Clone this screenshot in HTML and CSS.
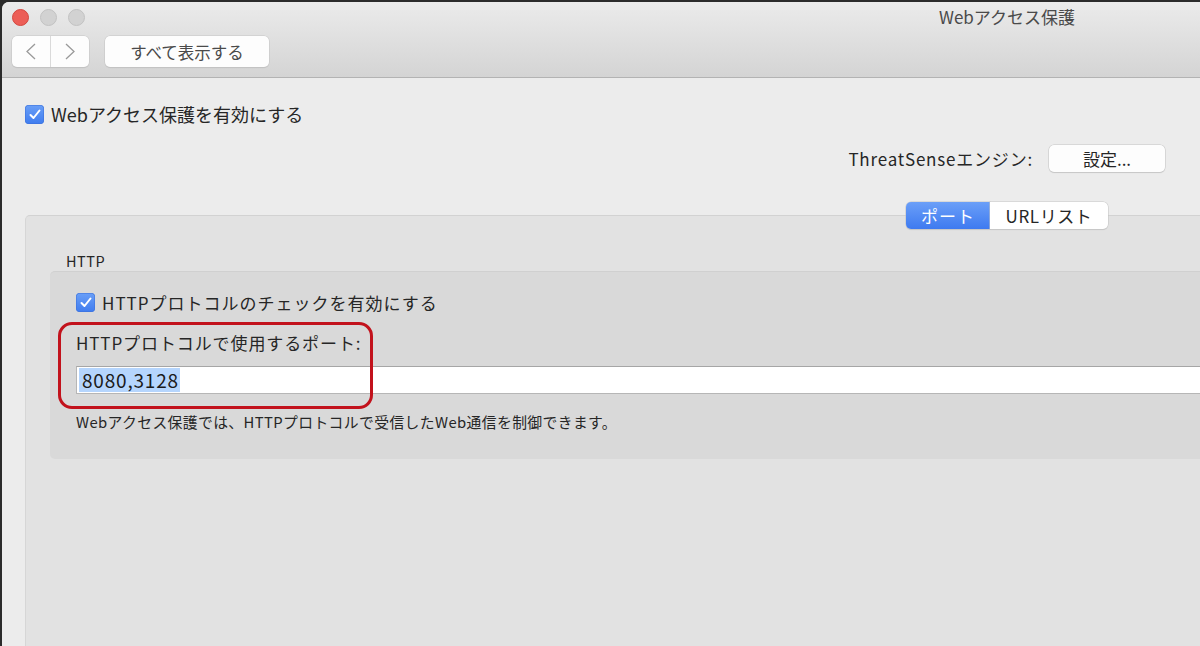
FILE: index.html
```html
<!DOCTYPE html>
<html lang="ja">
<head>
<meta charset="utf-8">
<title>Webアクセス保護</title>
<link rel="stylesheet" href="styles.css">
</head>
<body>
<div class="window">
  <div class="titlebar">
    <div class="title-row">
      <div class="lights">
        <span class="light close"></span>
        <span class="light"></span>
        <span class="light"></span>
      </div>
      <div class="title">Webアクセス保護</div>
    </div>
    <div class="toolbar">
      <div class="nav">
        <span class="nav-btn">
          <svg width="12" height="17" viewBox="0 0 12 17"><polyline points="10,1 2,8.5 10,16" fill="none" stroke="#9a9a9a" stroke-width="1.3"/></svg>
        </span>
        <span class="nav-btn">
          <svg width="12" height="17" viewBox="0 0 12 17"><polyline points="2,1 10,8.5 2,16" fill="none" stroke="#9a9a9a" stroke-width="1.3"/></svg>
        </span>
      </div>
      <div class="tool-btn">すべて表示する</div>
    </div>
  </div>

  <div class="content">
    <div class="check-row main-check">
      <span class="checkbox"><svg width="12" height="11" viewBox="0 0 12 11"><polyline points="1.5,6 4.5,9 10.5,1.5" fill="none" stroke="#fff" stroke-width="2" stroke-linecap="round" stroke-linejoin="round"/></svg></span>
      <span>Webアクセス保護を有効にする</span>
    </div>

    <div class="threat-row">
      <span class="threat-label">ThreatSenseエンジン:</span>
      <span class="btn">設定...</span>
    </div>

    <div class="tabbox">
      <div class="tabs">
        <span class="seg active">ポート</span>
        <span class="seg">URLリスト</span>
      </div>

      <div class="group-label">HTTP</div>
      <div class="group">
        <div class="check-row spaced">
          <span class="checkbox"><svg width="12" height="11" viewBox="0 0 12 11"><polyline points="1.5,6 4.5,9 10.5,1.5" fill="none" stroke="#fff" stroke-width="2" stroke-linecap="round" stroke-linejoin="round"/></svg></span>
          <span>HTTPプロトコルのチェックを有効にする</span>
        </div>
        <div class="port-label">HTTPプロトコルで使用するポート:</div>
        <div class="field"><span class="sel">8080,3128</span></div>
        <div class="desc">Webアクセス保護では、HTTPプロトコルで受信したWeb通信を制御できます。</div>
        <div class="highlight"></div>
      </div>
    </div>
  </div>
</div>
</body>
</html>
```

FILE: styles.css
```css
html, body {
  margin: 0;
  padding: 0;
}
body {
  background: #2b2b2b;
  font-family: "Noto Sans CJK JP", "Noto Sans", sans-serif;
  color: #262626;
  overflow: hidden;
  height: 646px;
}
.window {
  margin: 2px 0 0 2px;
  height: 644px;
  background: #ececec;
  border-top-left-radius: 7px;
  overflow: hidden;
  display: flex;
  flex-direction: column;
}
.titlebar {
  height: 75px;
  background: linear-gradient(#ebebeb, #d4d4d4);
  border-bottom: 1px solid #b3b3b3;
  flex: none;
}
.title-row {
  display: flex;
  align-items: center;
  height: 30px;
  padding-left: 10px;
}
.lights {
  display: flex;
  gap: 11px;
}
.light {
  width: 15px;
  height: 15px;
  border-radius: 50%;
  background: #d2d2d2;
  border: 1px solid #c2c2c2;
}
.light.close {
  background: #ec5e57;
  border-color: #d3473f;
}
.title {
  margin-left: auto;
  margin-right: 125px;
  font-size: 17px;
  color: #4a4a4a;
  line-height: 20px;
}
.toolbar {
  display: flex;
  align-items: center;
  gap: 16px;
  padding: 4px 0 0 10px;
}
.nav {
  display: flex;
  height: 31px;
  width: 77px;
  background: #fdfdfd;
  border-radius: 5px;
  box-shadow: 0 0 0 0.5px #c6c6c6, 0 1px 1px rgba(0,0,0,0.12);
}
.nav-btn {
  flex: 1;
  display: flex;
  align-items: center;
  justify-content: center;
}
.nav-btn + .nav-btn {
  border-left: 1px solid #dadada;
}
.tool-btn {
  height: 31px;
  width: 164px;
  background: #fdfdfd;
  border-radius: 5px;
  box-shadow: 0 0 0 0.5px #c6c6c6, 0 1px 1px rgba(0,0,0,0.12);
  display: flex;
  align-items: center;
  justify-content: center;
  font-size: 16.5px;
  color: #4a4a4a;
}
.content {
  flex: 1;
  display: flex;
  flex-direction: column;
  padding: 24px 0 0 23px;
}
.check-row {
  display: flex;
  align-items: center;
  gap: 7px;
  height: 24px;
  font-size: 17px;
}
.check-row.spaced {
  letter-spacing: 1px;
}
.main-check {
  font-size: 18px;
}
.checkbox {
  width: 19px;
  height: 19px;
  border-radius: 4px;
  background: linear-gradient(#6a9ff7, #3f7cef);
  box-shadow: inset 0 0 0 0.5px #3a6fd8;
  display: flex;
  align-items: center;
  justify-content: center;
  flex: none;
}
.threat-row {
  margin-top: 19px;
  display: flex;
  justify-content: flex-end;
  align-items: center;
  gap: 16px;
  padding-right: 35px;
  font-size: 17px;
  height: 27px;
}
.threat-label {
  letter-spacing: 0.8px;
}
.btn {
  width: 116px;
  height: 27px;
  background: #fdfdfd;
  border-radius: 5px;
  box-shadow: 0 0 0 0.5px #c4c4c4, 0 1px 1px rgba(0,0,0,0.14);
  display: flex;
  align-items: center;
  justify-content: center;
  font-size: 17px;
}
.tabbox {
  margin-top: 43px;
  flex: 1;
  background: #e2e2e2;
  border-top: 1px solid #d2d2d2;
  border-left: 1px solid #d6d6d6;
  border-top-left-radius: 5px;
  display: flex;
  flex-direction: column;
}
.tabs {
  margin-top: -14px;
  display: flex;
  justify-content: flex-end;
  padding-right: 92px;
}
.seg {
  height: 27px;
  display: flex;
  align-items: center;
  justify-content: center;
  font-size: 17px;
  background: #fff;
  box-shadow: 0 0 0 0.5px #c6c6c6, 0 1px 1px rgba(0,0,0,0.12);
}
.seg.active {
  width: 84px;
  color: #fff;
  background: linear-gradient(#6b9ff8, #3e7af0);
  border-radius: 5px 0 0 5px;
  letter-spacing: 1px;
}
.seg + .seg {
  width: 118px;
  border-radius: 0 5px 5px 0;
  letter-spacing: 0.6px;
}
.group-label {
  margin: 22px 0 0 40px;
  font-size: 14.5px;
  line-height: 20px;
  letter-spacing: 0.5px;
}
.group {
  position: relative;
  margin: 0 0 0 24px;
  background: #d9d9d9;
  border-top: 1px solid #d0d0d0;
  border-radius: 5px 0 0 5px;
  padding: 18px 0 27px 26px;
  display: flex;
  flex-direction: column;
}
.port-label {
  margin-top: 17px;
  font-size: 17px;
  line-height: 24px;
  letter-spacing: 0.9px;
}
.field {
  margin-top: 11px;
  height: 26px;
  background: #fff;
  border: 1px solid #b6b6b6;
  border-top-color: #a6a6a6;
  border-right: none;
  display: flex;
  align-items: center;
  padding-left: 2px;
  font-size: 19px;
}
.sel {
  background: #b5d5fd;
  color: #1a1a1a;
  padding: 0 1px 0 3px;
  line-height: 24px;
  letter-spacing: 0.8px;
}
.desc {
  margin-top: 18px;
  font-size: 14.8px;
  line-height: 20px;
  letter-spacing: 0.4px;
}
.highlight {
  position: absolute;
  left: 8px;
  top: 50px;
  width: 309px;
  height: 81px;
  border: 3px solid #c2121c;
  border-radius: 14px;
}
```
